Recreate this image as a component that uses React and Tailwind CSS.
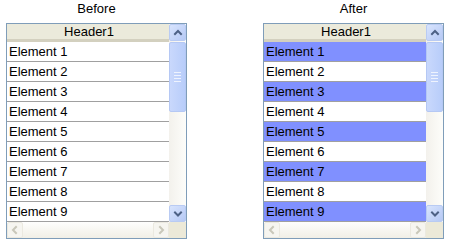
import React from "react";

const rows = [1, 2, 3, 4, 5, 6, 7, 8, 9];

function Chevron({ dir, color = "#4d6185" }) {
  const paths = {
    up: "M3 7 L6 4 L9 7",
    down: "M3 4.5 L6 7.5 L9 4.5",
    left: "M7 3 L4 6 L7 9",
    right: "M5 3 L8 6 L5 9",
  };
  return (
    <svg width="12" height="12" viewBox="0 0 12 12">
      <path d={paths[dir]} fill="none" stroke={color} strokeWidth="2" strokeLinecap="square" />
    </svg>
  );
}

function VBtn({ dir }) {
  return (
    <div className="h-[17px] w-[17px] flex items-center justify-center rounded-[2px] border border-[#b9cbf3] bg-gradient-to-br from-[#d8e4fd] to-[#b6c9f5]">
      <Chevron dir={dir} />
    </div>
  );
}

function HBtn({ dir }) {
  return (
    <div className="h-[16px] w-[16px] flex items-center justify-center rounded-[2px] border border-[#ebe9e0] bg-[#f6f5f0]">
      <Chevron dir={dir} color="#c9c7ba" />
    </div>
  );
}

function Panel({ title, selectable }) {
  return (
    <div className="flex flex-col w-[181px]">
      <div className="h-[23px] leading-[18px] text-center text-[13px] text-black">{title}</div>
      <div className="border border-[#7f9db9] bg-white flex flex-col">
        <div className="flex">
          <div className="flex flex-col w-[162px]">
            <div className="h-[18px] bg-[#ebeadb] border-b-[3px] border-[#d3d0bf] flex items-center justify-center text-[13px] leading-none text-black">
              <span className="ml-[2px]">Header1</span>
            </div>
            {rows.map((n) => (
              <div
                key={n}
                className={
                  "h-[20px] border-b border-[#a0a0a0] flex items-center pl-[2px] text-[13px] text-black " +
                  (selectable && n % 2 === 1 ? "bg-[#8090ff]" : "bg-white")
                }
              >
                Element {n}
              </div>
            ))}
          </div>
          <div className="w-[17px] flex flex-col bg-gradient-to-r from-[#f3f1ec] to-[#fdfdfa]">
            <VBtn dir="up" />
            <div className="mt-[1px] h-[70px] w-[17px] rounded-[2px] border border-[#b5c8f4] bg-gradient-to-r from-[#c9d8fc] to-[#b8cdfa] flex flex-col items-center justify-center gap-[2px]">
              <div className="h-[1px] w-[7px] bg-[#eef3fe]" />
              <div className="h-[1px] w-[7px] bg-[#eef3fe]" />
              <div className="h-[1px] w-[7px] bg-[#eef3fe]" />
              <div className="h-[1px] w-[7px] bg-[#eef3fe]" />
            </div>
            <div className="flex-1" />
            <VBtn dir="down" />
          </div>
        </div>
        <div className="flex h-[16px]">
          <div className="w-[162px] flex bg-gradient-to-b from-[#fefefd] to-[#f1efe6]">
            <HBtn dir="left" />
            <div className="flex-1" />
            <HBtn dir="right" />
          </div>
          <div className="w-[17px] bg-[#ece9d8]" />
        </div>
      </div>
    </div>
  );
}

export default function App() {
  return (
    <div
      className="w-[449px] h-[248px] bg-white flex pl-[6px] gap-[76px]"
      style={{ fontFamily: '"Liberation Sans", Arial, sans-serif' }}
    >
      <Panel title="Before" />
      <Panel title="After" selectable />
    </div>
  );
}
